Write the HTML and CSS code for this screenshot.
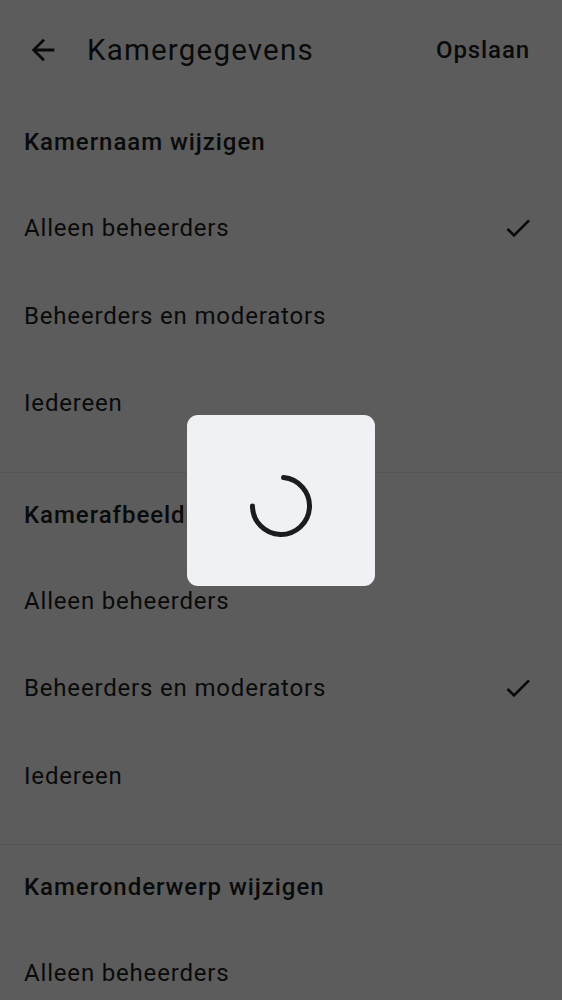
FILE: index.html
```html
<!DOCTYPE html>
<html lang="nl">
<head>
<meta charset="utf-8">
<title>Kamergegevens</title>
<link rel="stylesheet" href="styles.css">
</head>
<body>
<div class="screen">
  <header class="topbar">
    <svg class="back" viewBox="0 0 24 24" aria-hidden="true"><path d="M20 11H7.83l5.59-5.59L12 4l-8 8 8 8 1.41-1.41L7.83 13H20v-2z"/></svg>
    <h1 class="title">Kamergegevens</h1>
    <span class="save">Opslaan</span>
  </header>

  <section class="group">
    <h2 class="group-title">Kamernaam wijzigen</h2>
    <div class="option"><span>Alleen beheerders</span><svg class="check" viewBox="0 0 24 24"><path d="M9 16.17L4.83 12l-1.42 1.41L9 19 21 7l-1.41-1.41z"/></svg></div>
    <div class="option"><span>Beheerders en moderators</span></div>
    <div class="option"><span>Iedereen</span></div>
  </section>

  <section class="group">
    <h2 class="group-title">Kamerafbeelding wijzigen</h2>
    <div class="option"><span>Alleen beheerders</span></div>
    <div class="option"><span>Beheerders en moderators</span><svg class="check" viewBox="0 0 24 24"><path d="M9 16.17L4.83 12l-1.42 1.41L9 19 21 7l-1.41-1.41z"/></svg></div>
    <div class="option"><span>Iedereen</span></div>
  </section>

  <section class="group">
    <h2 class="group-title">Kameronderwerp wijzigen</h2>
    <div class="option"><span>Alleen beheerders</span></div>
  </section>
</div>

<div class="scrim">
  <div class="dialog">
    <svg class="spinner" viewBox="0 0 64 64" aria-hidden="true">
      <path d="M34.5 3.6 A28.5 28.5 0 1 1 3.5 32"/>
    </svg>
  </div>
</div>
</body>
</html>
```
FILE: styles.css
```css
* { box-sizing: border-box; }

html, body {
  margin: 0;
  padding: 0;
  background: #ffffff;
}

body {
  font-family: Roboto, "Noto Sans", "Liberation Sans", sans-serif;
  color: #1b1c20;
  height: 1000px;
  overflow: hidden;
}

.screen {
  display: flex;
  flex-direction: column;
}

.topbar {
  height: 100px;
  display: flex;
  align-items: center;
  padding: 0 32px 0 26px;
}

.back {
  width: 34px;
  height: 34px;
  fill: #1b1c20;
  flex: none;
}

.title {
  margin: 0 0 0 27px;
  font-size: 29.5px;
  font-weight: 400;
  line-height: 36px;
  letter-spacing: 1.2px;
  flex: 1;
}

.save {
  font-size: 24px;
  font-weight: 500;
  line-height: 30px;
  letter-spacing: 0.9px;
}

.group {
  display: flex;
  flex-direction: column;
  padding: 0 0 24.5px;
  border-bottom: 1px solid #ececec;
}

.group-title {
  margin: 0;
  height: 84.5px;
  display: flex;
  align-items: center;
  padding: 0 24px;
  font-size: 24px;
  font-weight: 500;
  line-height: 28px;
  letter-spacing: 0.95px;
}

.option {
  height: 87.5px;
  display: flex;
  align-items: center;
  justify-content: space-between;
  padding: 0 28px 0 24px;
  font-size: 24px;
  font-weight: 400;
  line-height: 28px;
  letter-spacing: 0.82px;
}

.check {
  width: 32px;
  height: 32px;
  fill: #1b1c20;
  flex: none;
}

.scrim {
  position: fixed;
  inset: 0;
  background: rgba(0, 0, 0, 0.64);
  display: flex;
  align-items: center;
  justify-content: center;
}

.dialog {
  width: 188px;
  height: 171px;
  background: #f0f1f5;
  border-radius: 11px;
  display: flex;
  justify-content: center;
  padding-top: 59px;
}

.spinner {
  width: 64px;
  height: 64px;
  fill: none;
  stroke: #1b1c20;
  stroke-width: 5;
  stroke-linecap: round;
}
```
